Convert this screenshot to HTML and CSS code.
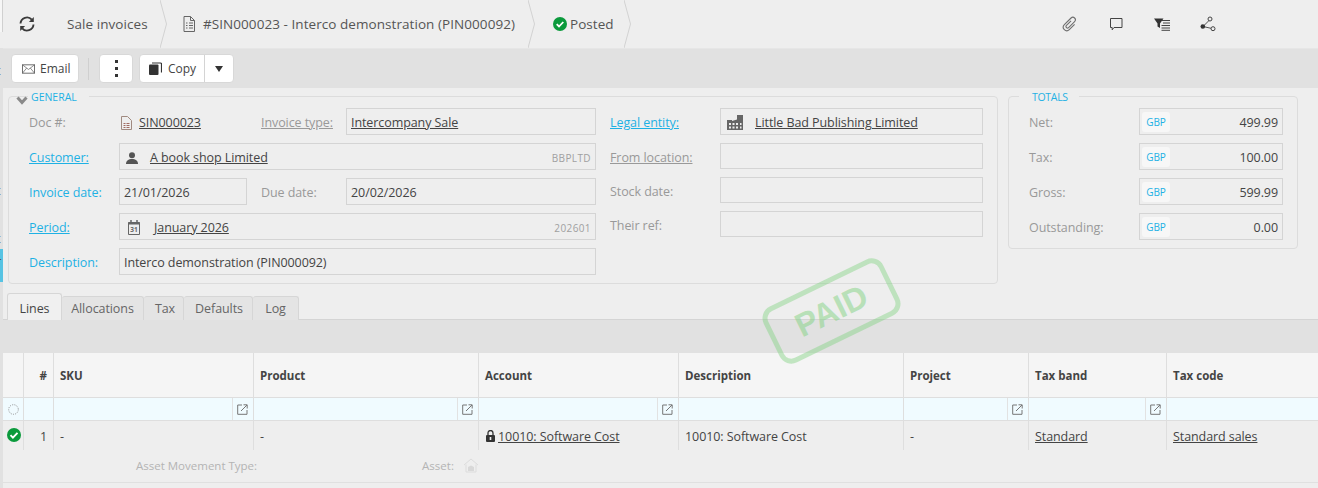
FILE: index.html
```html
<!DOCTYPE html>
<html lang="en">
<head>
<meta charset="utf-8">
<title>Sale invoice</title>
<link rel="stylesheet" href="styles.css">
</head>
<body>
<div class="page">
  <aside class="rail-top"></aside>
  <aside class="rail">
    <span class="rail-t rail-t1">t</span>
    <span class="rail-t rail-t2">t</span>
    <span class="rail-t rail-t3">t</span>
    <span class="rail-blue"></span>
    <span class="rail-t rail-t4">r</span>
  </aside>
  <header class="crumbs">
    <div class="crumb crumb-refresh">
      <svg class="ico-refresh" viewBox="0 0 16 16" width="16" height="16"><path d="M1.500 7.500a6.500 6.500 0 0 1 11.300-3.900M14.500 8.500a6.500 6.500 0 0 1-11.300 3.900" fill="none" stroke="#3a3a3a" stroke-width="1.900"/><path d="M14.800 1v5h-4.900zM1.200 15v-5h4.900z" fill="#3a3a3a"/></svg>
    </div>
    <div class="crumb crumb-a">Sale invoices<svg class="chev" viewBox="0 0 7 48" width="7" height="48"><path d="M0 0l6.500 24L0 48" fill="none" stroke="#d2d2d2"/></svg></div>
    <div class="crumb crumb-b">
      <svg viewBox="0 0 12 16" width="12" height="16"><path d="M1 .5h6.500l4 4v11H1z" fill="none" stroke="#666"/><path d="M7.500 .5v4h4M3 7h1.500M3 9.500h1.500M3 12h1.500M6 7h4M6 9.500h4M6 12h4" fill="none" stroke="#666"/></svg>
      <span>#SIN000023 - Interco demonstration (PIN000092)</span>
      <svg class="chev" viewBox="0 0 7 48" width="7" height="48"><path d="M0 0l6.500 24L0 48" fill="none" stroke="#d2d2d2"/></svg>
    </div>
    <div class="crumb crumb-c">
      <svg viewBox="0 0 14 14" width="14" height="14"><circle cx="7" cy="7" r="7" fill="#0b9a3c"/><path d="M3.700 7.200l2.300 2.300 4.300-4.500" fill="none" stroke="#fff" stroke-width="1.800"/></svg>
      <span>Posted</span>
      <svg class="chev" viewBox="0 0 7 48" width="7" height="48"><path d="M0 0l6.500 24L0 48" fill="none" stroke="#d2d2d2"/></svg>
    </div>
    <div class="head-tools">
      <svg viewBox="0 0 16 16" width="16" height="16"><g transform="rotate(45 8 8)"><path d="M6.500 5v6.500a1.500 1.500 0 0 0 3 0V3a2.500 2.500 0 0 0-5 0v9.500a3.500 3.500 0 0 0 7 0V5" fill="none" stroke="#6e6e6e" stroke-width="1.100"/></g></svg>
      <svg viewBox="0 0 14 14" width="14" height="14"><path d="M1.500 1.500h11.500v9H5L3.200 12.800v-2.300H1.500z" fill="none" stroke="#444"/></svg>
      <svg viewBox="0 0 17 13" width="17" height="13"><path d="M0 .5h9.500L6 5.500V10L3.500 8.500v-3z" fill="#333"/><path d="M8 2.500h8M9 5h7M7.500 7.500h8.500M7.500 10h8.500M7.500 12.300h8.500" stroke="#444" fill="none"/></svg>
      <svg class="ico-share" viewBox="0 0 16 16" width="16" height="16"><path d="M3 10.500 10 3.500M3 10.500l9 2" stroke="#555" fill="none"/><circle cx="2.800" cy="10.500" r="2.300" fill="#333"/><circle cx="10" cy="3" r="2" fill="#eee" stroke="#444"/><circle cx="13" cy="12.700" r="2" fill="#eee" stroke="#444"/></svg>
    </div>
  </header>

  <div class="toolbar">
    <button class="btn btn-email">
      <svg viewBox="0 0 14 10" width="13" height="10"><rect x=".5" y=".5" width="13" height="9" fill="none" stroke="#666"/><path d="M.5.500 7 5.500l6.500-5M.5 9.500l4.500-5.500M13.500 9.500 9 4" fill="none" stroke="#666" stroke-width=".8"/></svg>
      <span>Email</span>
    </button>
    <span class="tool-sep"></span>
    <button class="btn btn-more"><span class="dots"><i></i><i></i><i></i></span></button>
    <div class="btn-split">
      <button class="btn-part btn-copy">
        <svg viewBox="0 0 13 13" width="13" height="13"><rect x="0" y="2.500" width="9.500" height="10.500" rx="1" fill="#333"/><path d="M3 1h8.500a1 1 0 0 1 1 1v8.500" fill="none" stroke="#333" stroke-width="1.200"/></svg>
        <span>Copy</span>
      </button>
      <button class="btn-part btn-caret"><svg viewBox="0 0 8 6" width="8" height="6"><path d="M0 0h8L4 6z" fill="#333"/></svg></button>
    </div>
  </div>

  <main class="form">
    <div class="panels">
      <section class="fs fs-general">
        <h3 class="fs-title fs-title-general">GENERAL</h3>
        <svg class="fs-chevron" viewBox="0 0 12 9" width="12" height="9"><path d="M1.500 1.500 6 6.500l4.500-5" fill="none" stroke="#8a8a8a" stroke-width="3"/></svg>
        <div class="gen-cols">
          <div class="gen-left">
            <div class="row">
              <span class="lbl">Doc #:</span>
              <div class="plain-val">
                <svg viewBox="0 0 11 14" width="11" height="14"><path d="M.5.500h6l4 4v9H.5z" fill="none" stroke="#a08a80"/><path d="M2.500 7.500h2M2.500 9.500h2M2.500 11.500h2M5.500 7.500h3M5.500 9.500h3M5.500 11.500h3" stroke="#a06a60"/></svg>
                <a class="val-link">SIN000023</a>
              </div>
              <span class="lbl lbl-mid"><a class="lbl-grey-link">Invoice type:</a></span>
              <div class="box box-mid"><a class="val-link">Intercompany Sale</a></div>
            </div>
            <div class="row">
              <span class="lbl"><a class="lbl-blue-link">Customer:</a></span>
              <div class="box box-full">
                <svg class="ico-person" viewBox="0 0 12 12" width="12" height="12"><circle cx="6" cy="3.200" r="3" fill="#555"/><path d="M0 12c0-3.500 2.500-5 6-5s6 1.500 6 5z" fill="#555"/></svg>
                <a class="val-link">A book shop Limited</a>
                <span class="code">BBPLTD</span>
              </div>
            </div>
            <div class="row">
              <span class="lbl lbl-blue">Invoice date:</span>
              <div class="box box-date">21/01/2026</div>
              <span class="lbl lbl-mid">Due date:</span>
              <div class="box box-mid">20/02/2026</div>
            </div>
            <div class="row">
              <span class="lbl"><a class="lbl-blue-link">Period:</a></span>
              <div class="box box-full">
                <svg class="ico-cal" viewBox="0 0 12 15" width="12" height="15"><path d="M.5 2.500h11v12H.500z" fill="none" stroke="#666"/><path d="M.5 2h11v2.500H.500z" fill="#666"/><path d="M3 0v3M9 0v3" stroke="#666" stroke-width="1.500"/><text class="cal-day" x="6" y="12" text-anchor="middle">31</text></svg>
                <a class="val-link">January 2026</a>
                <span class="code">202601</span>
              </div>
            </div>
            <div class="row">
              <span class="lbl lbl-blue">Description:</span>
              <div class="box box-full">Interco demonstration (PIN000092)</div>
            </div>
          </div>
          <div class="gen-right">
            <div class="row row-r1">
              <span class="lbl lbl-r"><a class="lbl-blue-link">Legal entity:</a></span>
              <div class="box box-r box-tall">
                <svg class="ico-fac" viewBox="0 0 16 15" width="16" height="15"><path d="M0 5h5v1l5-1.500V0h6v15H0z" fill="#666"/><path d="M2 8h2v2H2zM5.500 8h2v2h-2zM9 8h2v2H9zM13 8h1.500v2H13zM2 11.500h2v2H2zM5.500 11.500h2v2h-2zM9 11.500h2v2H9zM13 11.500h1.500v2H13z" fill="#eee"/></svg>
                <a class="val-link">Little Bad Publishing Limited</a>
              </div>
            </div>
            <div class="row row-r">
              <span class="lbl lbl-r"><a class="lbl-grey-link">From location:</a></span>
              <div class="box box-r"></div>
            </div>
            <div class="row row-r">
              <span class="lbl lbl-r">Stock date:</span>
              <div class="box box-r"></div>
            </div>
            <div class="row row-r">
              <span class="lbl lbl-r">Their ref:</span>
              <div class="box box-r"></div>
            </div>
          </div>
        </div>
      </section>

      <section class="fs fs-totals">
        <h3 class="fs-title fs-title-totals">TOTALS</h3>
        <div class="tot-row"><span class="lbl lbl-t">Net:</span><div class="box box-tot"><span class="cur">GBP</span><span class="amt">499.99</span></div></div>
        <div class="tot-row"><span class="lbl lbl-t">Tax:</span><div class="box box-tot"><span class="cur">GBP</span><span class="amt">100.00</span></div></div>
        <div class="tot-row"><span class="lbl lbl-t">Gross:</span><div class="box box-tot"><span class="cur">GBP</span><span class="amt">599.99</span></div></div>
        <div class="tot-row"><span class="lbl lbl-t">Outstanding:</span><div class="box box-tot"><span class="cur">GBP</span><span class="amt">0.00</span></div></div>
      </section>
    </div>

    <nav class="tabs">
      <span class="tab tab-on tab-lines">Lines</span>
      <span class="tab tab-alloc">Allocations</span>
      <span class="tab tab-tax">Tax</span>
      <span class="tab tab-def">Defaults</span>
      <span class="tab tab-log">Log</span>
    </nav>
    <div class="grid-bar"></div>

    <div class="grid grid-head">
      <div class="c">&nbsp;</div><div class="c c-num">#</div><div class="c">SKU</div><div class="c">Product</div><div class="c">Account</div><div class="c">Description</div><div class="c">Project</div><div class="c">Tax band</div><div class="c">Tax code</div>
    </div>
    <div class="grid grid-filter">
      <div class="c c-spin"><svg viewBox="0 0 11 11" width="11" height="11"><circle cx="5.500" cy="5.500" r="4.800" fill="none" stroke="#8a8a8a" stroke-dasharray="1 1.300"/></svg></div>
      <div class="c"></div>
      <div class="c c-pick"><svg class="ext" viewBox="0 0 11 11"><use href="#ext"/></svg></div>
      <div class="c c-pick"><svg class="ext" viewBox="0 0 11 11"><use href="#ext"/></svg></div>
      <div class="c c-pick"><svg class="ext" viewBox="0 0 11 11"><use href="#ext"/></svg></div>
      <div class="c"></div>
      <div class="c c-pick"><svg class="ext" viewBox="0 0 11 11"><use href="#ext"/></svg></div>
      <div class="c c-pick"><svg class="ext" viewBox="0 0 11 11"><use href="#ext"/></svg></div>
      <div class="c"></div>
    </div>
    <div class="grid grid-row">
      <div class="c c-ok"><svg viewBox="0 0 14 14" width="14" height="14"><circle cx="7" cy="7" r="7" fill="#0b9a3c"/><path d="M3.500 7.200l2.400 2.400 4.600-4.700" fill="none" stroke="#fff" stroke-width="1.900"/></svg></div>
      <div class="c c-num">1</div>
      <div class="c">-</div>
      <div class="c">-</div>
      <div class="c c-acc"><svg viewBox="0 0 9 12" width="9" height="12"><path d="M2 5V3a2.500 2.500 0 0 1 5 0v2" fill="none" stroke="#333" stroke-width="1.300"/><rect y="5" width="9" height="7" rx="1" fill="#333"/><rect x="3.700" y="7" width="1.600" height="3" fill="#eee"/></svg><a class="val-link">10010: Software Cost</a></div>
      <div class="c">10010: Software Cost</div>
      <div class="c">-</div>
      <div class="c"><a class="val-link">Standard</a></div>
      <div class="c"><a class="val-link">Standard sales</a></div>
    </div>
    <div class="subrow">
      <span class="sub-lbl sub-a">Asset Movement Type:</span>
      <span class="sub-lbl sub-b">Asset:</span>
      <svg class="ico-asset" viewBox="0 0 16 15" width="16" height="15"><path d="M1 7 8 1l7 6M3 6.500V14h10V6.500" fill="none" stroke="#dcdcdc"/><path d="M5 9l3-1.500L11 9v4H5z" fill="#d8d8d8"/></svg>
    </div>
  </main>

  <div class="stamp"><span>PAID</span></div>

  <svg class="defs" width="0" height="0"><defs><g id="ext"><path d="M5 1H.7v9.300H10V6" fill="none" stroke="#777"/><path d="M4 7l6-6M6.500 .8h3.700v3.700" fill="none" stroke="#777"/></g></defs></svg>
</div>
</body>
</html>
```

FILE: styles.css
```css
* { box-sizing: border-box; }
html, body { margin: 0; padding: 0; }
body {
  background: #eee;
  font-family: "Open Sans", "Noto Sans", sans-serif;
  font-size: 12.5px;
  letter-spacing: -.08px;
  color: #444;
  overflow: hidden;
}
.page { position: relative; width: 1318px; height: 488px; overflow: hidden; }
.rail-top { position: absolute; left: 0; top: 0; width: 3px; height: 32px; background: #f6f6f6; border-right: 1px solid #d0d0d0; z-index: 2; }
.rail { position: absolute; left: 0; top: 48px; width: 3px; height: 440px; background: #e1e1e1; overflow: hidden; z-index: 2; }
.rail-t { position: absolute; left: -4px; font-size: 13px; line-height: 18px; color: #555; }
.rail-t1 { top: 13px; }
.rail-t2 { top: 133px; }
.rail-t3 { top: 181px; }
.rail-t4 { top: 204px; }
.rail-blue { position: absolute; left: 0; top: 201px; width: 3px; height: 33px; background: #57c3e3; }

.crumbs { display: flex; align-items: center; height: 48px; background: #eee; }
.crumb { position: relative; display: flex; align-items: center; height: 48px; font-size: 13.5px; letter-spacing: .06px; color: #555; }
.chev { position: absolute; right: 0; top: 0; }
.crumb-refresh { width: 67px; padding-left: 19px; }
.crumb-a { width: 100px; }
.crumb-b { width: 368px; padding-left: 16px; gap: 8px; }
.crumb-c { width: 96px; padding-left: 18px; gap: 3px; }
.head-tools { margin-left: 431px; display: flex; align-items: center; gap: 31px; height: 48px; }
.ico-share { margin-left: -2px; }

.toolbar { display: flex; align-items: center; height: 40px; background: #e1e1e1; border-top: 1px solid #e6e6e6; padding-left: 11px; }
.btn, .btn-split { height: 29px; background: #fff; border: 1px solid #d8d8d8; border-radius: 4px; font: inherit; font-size: 12px; color: #444; padding: 0; }
.btn { display: flex; align-items: center; }
.btn-email { width: 68px; padding-left: 10px; gap: 5px; }
.tool-sep { width: 1px; height: 22px; background: #cfcfcf; margin: 0 10px 0 9px; }
.btn-more { width: 34px; justify-content: center; }
.dots { display: flex; flex-direction: column; gap: 4px; }
.dots i { display: block; width: 3px; height: 3px; background: #333; }
.btn-split { display: flex; width: 95px; margin-left: 6px; }
.btn-part { background: none; border: 0; padding: 0; font: inherit; color: inherit; display: flex; align-items: center; height: 27px; }
.btn-copy { width: 65px; padding-left: 9px; gap: 6px; border-right: 1px solid #d4d4d4; }
.btn-caret { width: 28px; justify-content: center; }

.panels { display: flex; gap: 10px; padding: 8px 0 0 8px; height: 205px; align-items: flex-start; }
.fs { position: relative; border: 1px solid #dcdcdc; border-radius: 4px; }
.fs-general { width: 990px; height: 188px; padding: 11px 14px 0 20px; }
.fs-totals { width: 290px; height: 153px; padding: 11px 14px 0 20px; }
.fs-title { position: absolute; top: -7px; margin: 0; height: 14px; background: #eee; font-weight: 400; font-size: 10.5px; letter-spacing: 0; line-height: 14px; color: #1eb1e4; }
.fs-title-general { left: 19px; padding: 0 12px 0 3px; }
.fs-title-totals { left: 10px; width: 60px; padding-left: 13px; letter-spacing: -.3px; }
.fs-chevron { position: absolute; left: 7px; top: -1px; }

.gen-cols { display: flex; }
.gen-left { width: 568px; display: flex; flex-direction: column; gap: 8px; }
.gen-right { margin-left: 13px; width: 373px; }
.row { display: flex; align-items: center; height: 27px; }
.row-r { height: 26px; margin-top: 8px; }
.lbl { width: 90px; padding-top: 2px; color: #999; flex: none; white-space: nowrap; }
.lbl-blue { color: #1eb1e4; }
.lbl-mid { width: 85px; margin-left: 14px; }
.lbl-r { width: 110px; }
.lbl-t { width: 110px; }
.lbl-grey-link { color: #999; text-decoration: underline; }
.lbl-blue-link { color: #1eb1e4; text-decoration: underline; }
.val-link { color: #444; text-decoration: underline; }

.plain-val { width: 128px; padding: 2px 0 0 2px; display: flex; align-items: center; gap: 7px; }
.box { display: flex; align-items: center; height: 100%; border: 1px solid #d4d4d4; padding: 2px 4px 0; white-space: nowrap; }
.box-mid { width: 250px; }
.box-date { width: 128px; }
.box-full { width: 477px; }
.box-r { width: 263px; padding-left: 6px; }
.box-full > svg { flex: none; }
.ico-person { margin: 0 12px 0 2px; }
.ico-cal { margin: 0 14px 0 4px; }
.ico-fac { margin-right: 12px; }
.cal-day { font-size: 6.5px; font-weight: 700; fill: #666; letter-spacing: 0; }
.code { margin-left: auto; font-size: 10px; letter-spacing: .4px; color: #a0a0a0; }

.tot-row { display: flex; align-items: center; height: 27px; margin-bottom: 8px; }
.box-tot { width: 144px; padding: 0 4px 0 2px; }
.cur { display: inline-block; width: 28px; text-align: center; height: 20px; line-height: 20px; border-radius: 3px; background: #f7f7f7; color: #1eb1e4; font-size: 10px; letter-spacing: 0; }
.amt { margin-left: auto; padding-top: 2px; }

.tabs { display: flex; align-items: flex-end; height: 27px; padding-left: 7px; border-bottom: 1px solid #d4d4d4; }
.tab { height: 24px; margin-bottom: -1px; display: flex; align-items: center; justify-content: center; background: #e4e4e4; border: 1px solid #d6d6d6; border-left: 0; border-bottom: 0; border-radius: 3px 3px 0 0; color: #666; }
.tab-on { height: 27px; padding-top: 3px; background: #f0f0f0; color: #444; border-left: 1px solid #d6d6d6; }
.tab-lines { width: 55px; }
.tab-alloc { width: 82px; }
.tab-tax { width: 40px; padding-left: 3px; }
.tab-def { width: 69px; padding-left: 2px; }
.tab-log { width: 46px; }
.grid-bar { height: 33px; background: #e1e1e1; }

.grid { display: grid; grid-template-columns: 21px 30px 200px 225px 200px 225px 125px 138px 1fr; padding-left: 3px; }
.c { display: flex; align-items: center; padding-left: 6px; border-right: 1px solid #dedede; white-space: nowrap; min-width: 0; }
.c:last-child { border-right: 0; }
.grid-head { height: 45px; background: #f5f5f5; font-weight: 700; font-size: 11.5px; letter-spacing: 0; color: #444; border-bottom: 1px solid #dedede; }
.c-num { justify-content: flex-end; padding-right: 6px; padding-left: 0; }
.grid-filter { height: 23px; background: #f0fbff; border-bottom: 1px solid #dedede; }
.c-spin { padding-left: 5px; }
.c-pick { position: relative; justify-content: flex-end; padding-right: 5px; }
.c-pick::before { content: ""; position: absolute; right: 20px; top: 0; bottom: 0; width: 1px; background: #e2e2e2; }
.ext { width: 11px; height: 11px; }
.grid-row { height: 29px; }
.grid-row .c { padding-top: 1px; }
.c-ok { padding-left: 4px; }
.grid-row .c-ok { padding-top: 0; padding-bottom: 1px; }
.c-acc { gap: 3px; padding-left: 7px; }
.subrow { display: flex; align-items: center; height: 33px; padding-bottom: 1px; border-bottom: 1px solid #e0e0e0; font-size: 11.5px; letter-spacing: 0; }
.sub-lbl { color: #b4b4b4; }
.sub-a { margin-left: 136px; }
.sub-b { margin-left: 165px; }
.ico-asset { margin-left: 9px; }

.stamp { position: absolute; left: 765px; top: 280px; width: 133px; height: 62px; border: 5px solid rgba(130, 210, 130, .45); border-radius: 13px; transform: rotate(-26deg); display: flex; align-items: center; justify-content: center; font-family: "Liberation Sans", sans-serif; font-weight: 700; font-size: 33px; letter-spacing: 0; color: rgba(130, 210, 130, .5); }
.defs { position: absolute; }
```
